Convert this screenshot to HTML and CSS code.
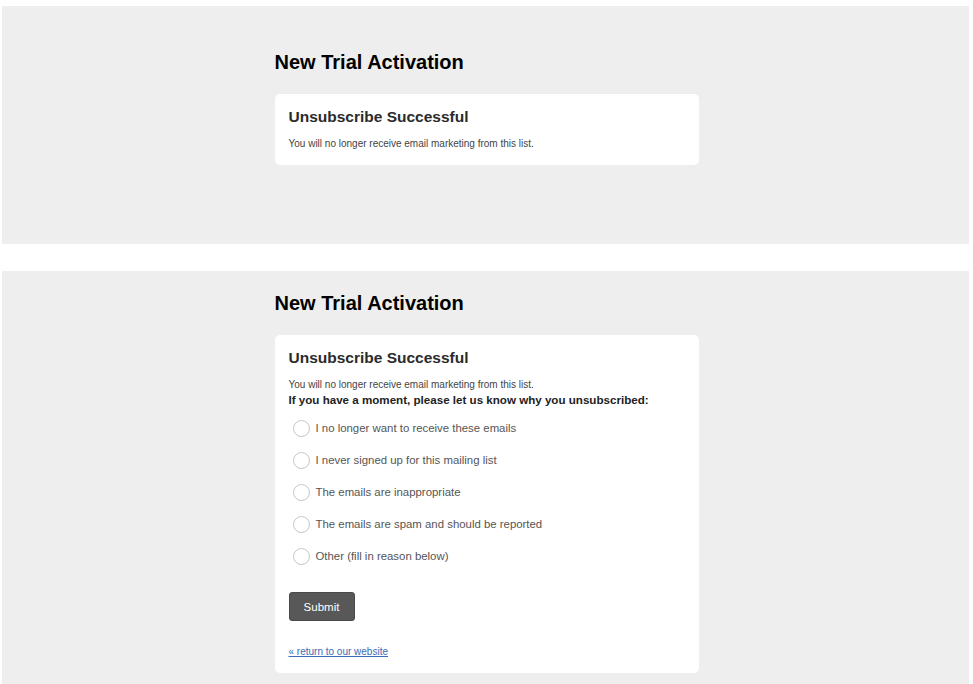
FILE: index.html
```html
<!DOCTYPE html>
<html>
<head>
  <meta charset="UTF-8">
  <title>New Trial Activation</title>
  <link rel="stylesheet" href="styles.css">
</head>
<body>
  <section class="panel panel-top">
    <div class="wrap">
      <h1>New Trial Activation</h1>
      <div class="card">
        <h2>Unsubscribe Successful</h2>
        <p class="note">You will no longer receive email marketing from this list.</p>
      </div>
    </div>
  </section>

  <section class="panel panel-bottom">
    <div class="wrap">
      <h1>New Trial Activation</h1>
      <form class="card">
        <h2>Unsubscribe Successful</h2>
        <p class="note">You will no longer receive email marketing from this list.</p>
        <p class="question">If you have a moment, please let us know why you unsubscribed:</p>

        <div class="reasons">
          <label class="reason"><input type="radio" name="reason"> I no longer want to receive these emails</label>
          <label class="reason"><input type="radio" name="reason"> I never signed up for this mailing list</label>
          <label class="reason"><input type="radio" name="reason"> The emails are inappropriate</label>
          <label class="reason"><input type="radio" name="reason"> The emails are spam and should be reported</label>
          <label class="reason"><input type="radio" name="reason"> Other (fill in reason below)</label>
        </div>

        <button type="button" class="submit-btn">Submit</button>

        <a class="back-link" href="#">&laquo; return to our website</a>
      </form>
    </div>
  </section>
</body>
</html>
```

FILE: styles.css
```css
body {
  margin: 0;
  background: #fff;
  font-family: 'Liberation Sans', Arial, Helvetica, sans-serif;
  color: #333;
}

.panel {
  background: #eeeeee;
  margin: 0 4px 0 2px;
}

.panel-top {
  margin-top: 6px;
  padding: 44px 0 79px;
}

.panel-bottom {
  margin-top: 27px;
  padding: 20px 0 12px;
}

.wrap {
  width: 424px;
  margin: 0 auto;
  padding-left: 2px;
}

h1 {
  font-size: 20px;
  line-height: 24px;
  font-weight: bold;
  color: #000;
  margin: 0 0 20px 0;
}

.card {
  display: block;
  background: #fff;
  border-radius: 5px;
  padding: 13px 14px 14px;
}

.card h2 {
  font-size: 15.5px;
  line-height: 20px;
  font-weight: bold;
  color: #2b2b2b;
  margin: 0 0 9px 0;
}

.note {
  font-size: 10px;
  line-height: 15px;
  color: #444;
  margin: 0;
}

.question {
  font-size: 11.6px;
  line-height: 16px;
  font-weight: bold;
  color: #222;
  margin: 0 0 4px 0;
}

.reasons {
  display: flex;
  flex-direction: column;
}

.reason {
  display: flex;
  align-items: center;
  gap: 6px;
  height: 32px;
  font-size: 11.4px;
  color: #555;
  cursor: pointer;
}

.reason input {
  appearance: none;
  -webkit-appearance: none;
  width: 17px;
  height: 17px;
  margin: 0 0 0 4px;
  border: 1.5px solid #c4c4c4;
  border-radius: 50%;
  background: #fff;
  flex-shrink: 0;
}

.reason input:checked {
  border-color: #555;
  box-shadow: inset 0 0 0 4px #fff;
  background: #555;
}

.submit-btn {
  display: block;
  margin-top: 20px;
  width: 66px;
  height: 29px;
  background: #585858;
  color: #fff;
  border: 1px solid #4a4a4a;
  border-radius: 3px;
  font-family: inherit;
  font-size: 11.5px;
  cursor: pointer;
}

.submit-btn:hover {
  background: #444;
}

.back-link {
  display: inline-block;
  margin-top: 24px;
  font-size: 10px;
  line-height: 14px;
  color: #3b6bb5;
  text-decoration: underline;
}
```
